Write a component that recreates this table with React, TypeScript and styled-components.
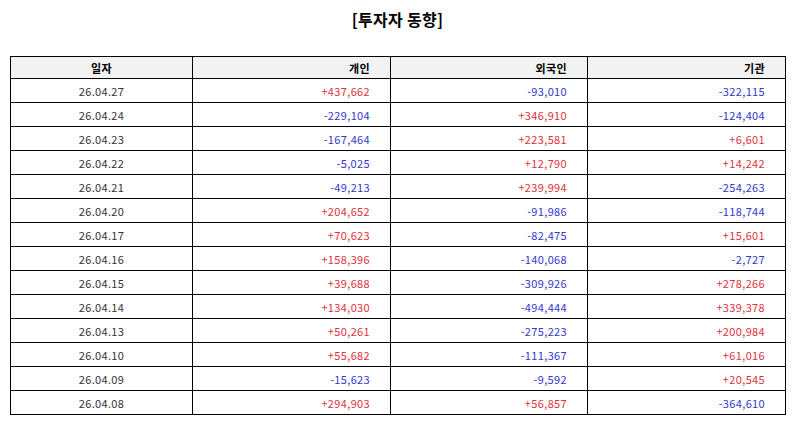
import styled, { createGlobalStyle } from "styled-components";

const GlobalStyle = createGlobalStyle`
    body {
        margin: 0;
        background: #fff;
        font-family: "Noto Sans CJK KR", "Noto Sans", sans-serif;
    }
`;

const Page = styled.div`
    width: 794px;
    padding: 7px 9px 0 10px;
    box-sizing: border-box;
`;

const Title = styled.h1`
    margin: 0 0 25px 0;
    text-align: center;
    font-size: 16px;
    font-weight: bold;
    line-height: 24px;
    letter-spacing: 0.3px;
    color: #000;
`;

const Table = styled.table`
    width: 776px;
    border-collapse: collapse;
    table-layout: fixed;
    font-size: 11px;
    letter-spacing: 0.35px;
    color: #222;
`;

const Head = styled.th<{ $align?: string }>`
    height: 21px;
    padding: 0 20px 0 0;
    background: #f2f2f2;
    border: 1px solid #000;
    font-weight: bold;
    color: #000;
    text-align: ${(p) => p.$align || "right"};
`;

const DateHead = styled(Head)`
    padding: 0;
`;

const Cell = styled.td<{ $up?: boolean }>`
    height: 23px;
    padding: 0 20px 0 0;
    border: 1px solid #000;
    text-align: right;
    color: ${(p) => (p.$up ? "#e2303a" : "#3535d0")};
`;

const DateCell = styled.td`
    height: 23px;
    padding: 0;
    border: 1px solid #000;
    text-align: center;
    color: #333;
`;

const rows: [string, string, string, string][] = [
    ["26.04.27", "+437,662", "-93,010", "-322,115"],
    ["26.04.24", "-229,104", "+346,910", "-124,404"],
    ["26.04.23", "-167,464", "+223,581", "+6,601"],
    ["26.04.22", "-5,025", "+12,790", "+14,242"],
    ["26.04.21", "-49,213", "+239,994", "-254,263"],
    ["26.04.20", "+204,652", "-91,986", "-118,744"],
    ["26.04.17", "+70,623", "-82,475", "+15,601"],
    ["26.04.16", "+158,396", "-140,068", "-2,727"],
    ["26.04.15", "+39,688", "-309,926", "+278,266"],
    ["26.04.14", "+134,030", "-494,444", "+339,378"],
    ["26.04.13", "+50,261", "-275,223", "+200,984"],
    ["26.04.10", "+55,682", "-111,367", "+61,016"],
    ["26.04.09", "-15,623", "-9,592", "+20,545"],
    ["26.04.08", "+294,903", "+56,857", "-364,610"],
];

export default function App() {
    return (
        <Page>
            <GlobalStyle />
            <Title>[투자자 동향]</Title>
            <Table>
                <colgroup>
                    <col style={{ width: 182 }} />
                    <col style={{ width: 198 }} />
                    <col style={{ width: 197 }} />
                    <col style={{ width: 198 }} />
                </colgroup>
                <thead>
                    <tr>
                        <DateHead $align="center">일자</DateHead>
                        <Head>개인</Head>
                        <Head>외국인</Head>
                        <Head>기관</Head>
                    </tr>
                </thead>
                <tbody>
                    {rows.map(([date, ...vals]) => (
                        <tr key={date}>
                            <DateCell>{date}</DateCell>
                            {vals.map((v, i) => (
                                <Cell key={i} $up={v.startsWith("+")}>
                                    {v}
                                </Cell>
                            ))}
                        </tr>
                    ))}
                </tbody>
            </Table>
        </Page>
    );
}
